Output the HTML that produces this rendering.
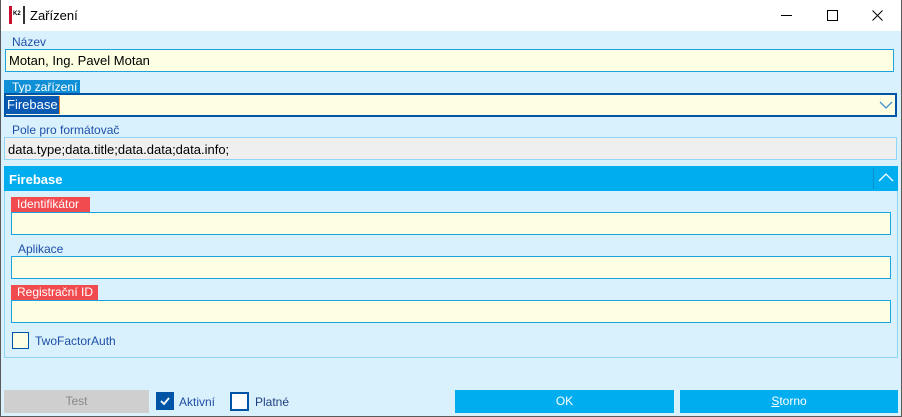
<!DOCTYPE html>
<html><head><style>
*{box-sizing:border-box;margin:0;padding:0}
body{width:902px;height:417px;overflow:hidden;font-family:"Liberation Sans",sans-serif;font-size:12px;background:#d9f1fd;position:relative}
.a{position:absolute}
.win{position:absolute;left:0;top:0;width:902px;height:417px;border:1px solid #5a5a5a;border-top:none}
.tb{left:0;top:0;width:902px;height:31px;background:#fff}
.lbl{color:#1e4fa8;font-size:12px}
.inp{background:#fefee2;border:1px solid #1aa3e0}
.red{background:#f24b4f;color:#fff;padding-left:6px;line-height:15px}
</style></head><body>
<div class="a tb"></div>
<div class="a" style="left:9px;top:6px;width:16px;height:18px;background:#fff;border-left:3px solid #c8102e;border-right:2px solid #333"><div style="font-size:6px;font-weight:bold;margin-top:5px;margin-left:1px;color:#000">K2</div></div>
<div class="a" style="left:30px;top:8px;font-size:13px;color:#000">Zařízení</div>
<div class="a" style="left:781px;top:15px;width:11px;height:1px;background:#000"></div>
<div class="a" style="left:827px;top:10px;width:11px;height:11px;border:1px solid #000"></div>
<svg class="a" style="left:872px;top:10px" width="11" height="11"><path d="M0.5 0.5L10.5 10.5M10.5 0.5L0.5 10.5" stroke="#000" stroke-width="1"/></svg>

<div class="a lbl" style="left:12px;top:35px">Název</div>
<div class="a inp" style="left:5px;top:49px;width:889px;height:23px;padding:3px 3px;font-size:13px;color:#000">Motan, Ing. Pavel Motan</div>

<div class="a" style="left:4px;top:80px;width:76px;height:14px;background:#0f8fd6;color:#fff;padding-left:8px;line-height:14px">Typ zařízení</div>
<div class="a" style="left:4px;top:93px;width:893px;height:24px;background:#fefee2;border:2px solid #0054a6"></div>
<div class="a" style="left:6px;top:96px;height:18px;background:#0a59b3;color:#fff;font-size:13px;padding:1px 1px;line-height:16px;border-right:1px solid #f58220">Firebase</div>
<svg class="a" style="left:879px;top:101px" width="14" height="8"><path d="M1 1L7 7L13 1" stroke="#3f8fd0" fill="none" stroke-width="1.3"/></svg>

<div class="a lbl" style="left:12px;top:123px">Pole pro formátovač</div>
<div class="a" style="left:4px;top:137px;width:893px;height:23px;background:#efefef;border:1px solid #8fd6f5;padding:4px 3px;font-size:13px;color:#000">data.type;data.title;data.data;data.info;</div>

<div class="a" style="left:4px;top:166px;width:894px;height:192px;border:1px solid #8fd6f5"></div>
<div class="a" style="left:4px;top:166px;width:894px;height:25px;background:#00adef"></div>
<div class="a" style="left:9px;top:172px;color:#fff;font-weight:bold;font-size:13px">Firebase</div>
<div class="a" style="left:873px;top:168px;width:1px;height:21px;background:#0a8fc8"></div>
<svg class="a" style="left:878px;top:173px" width="16" height="10"><path d="M1 8L8 1L15 8" stroke="#fff" fill="none" stroke-width="1.3"/></svg>

<div class="a red" style="left:11px;top:197px;width:79px">Identifikátor</div>
<div class="a inp" style="left:11px;top:212px;width:880px;height:23px"></div>
<div class="a lbl" style="left:18px;top:242px">Aplikace</div>
<div class="a inp" style="left:11px;top:256px;width:880px;height:23px"></div>
<div class="a red" style="left:11px;top:285px;width:87px">Registrační ID</div>
<div class="a inp" style="left:11px;top:300px;width:880px;height:23px"></div>
<div class="a" style="left:12px;top:332px;width:17px;height:17px;background:#fefee2;border:1px solid #0054a6"></div>
<div class="a lbl" style="left:35px;top:334px">TwoFactorAuth</div>

<div class="a" style="left:4px;top:390px;width:145px;height:23px;background:#cfcfcf;color:#888;text-align:center;line-height:23px">Test</div>
<div class="a" style="left:156px;top:392px;width:18px;height:18px;background:#0054a6"></div>
<svg class="a" style="left:158px;top:394px" width="14" height="14"><path d="M3 7L6 10L11 4" stroke="#fff" fill="none" stroke-width="1.8"/></svg>
<div class="a lbl" style="left:179px;top:395px">Aktivní</div>
<div class="a" style="left:230px;top:392px;width:19px;height:19px;background:#fff;border:2px solid #0054a6"></div>
<div class="a lbl" style="left:255px;top:395px;color:#1e3f80">Platné</div>
<div class="a" style="left:455px;top:390px;width:219px;height:23px;background:#00adef;color:#fff;text-align:center;line-height:23px">OK</div>
<div class="a" style="left:680px;top:390px;width:218px;height:23px;background:#00adef;color:#fff;text-align:center;line-height:23px"><u>S</u>torno</div>
<div class="win"></div>
</body></html>
